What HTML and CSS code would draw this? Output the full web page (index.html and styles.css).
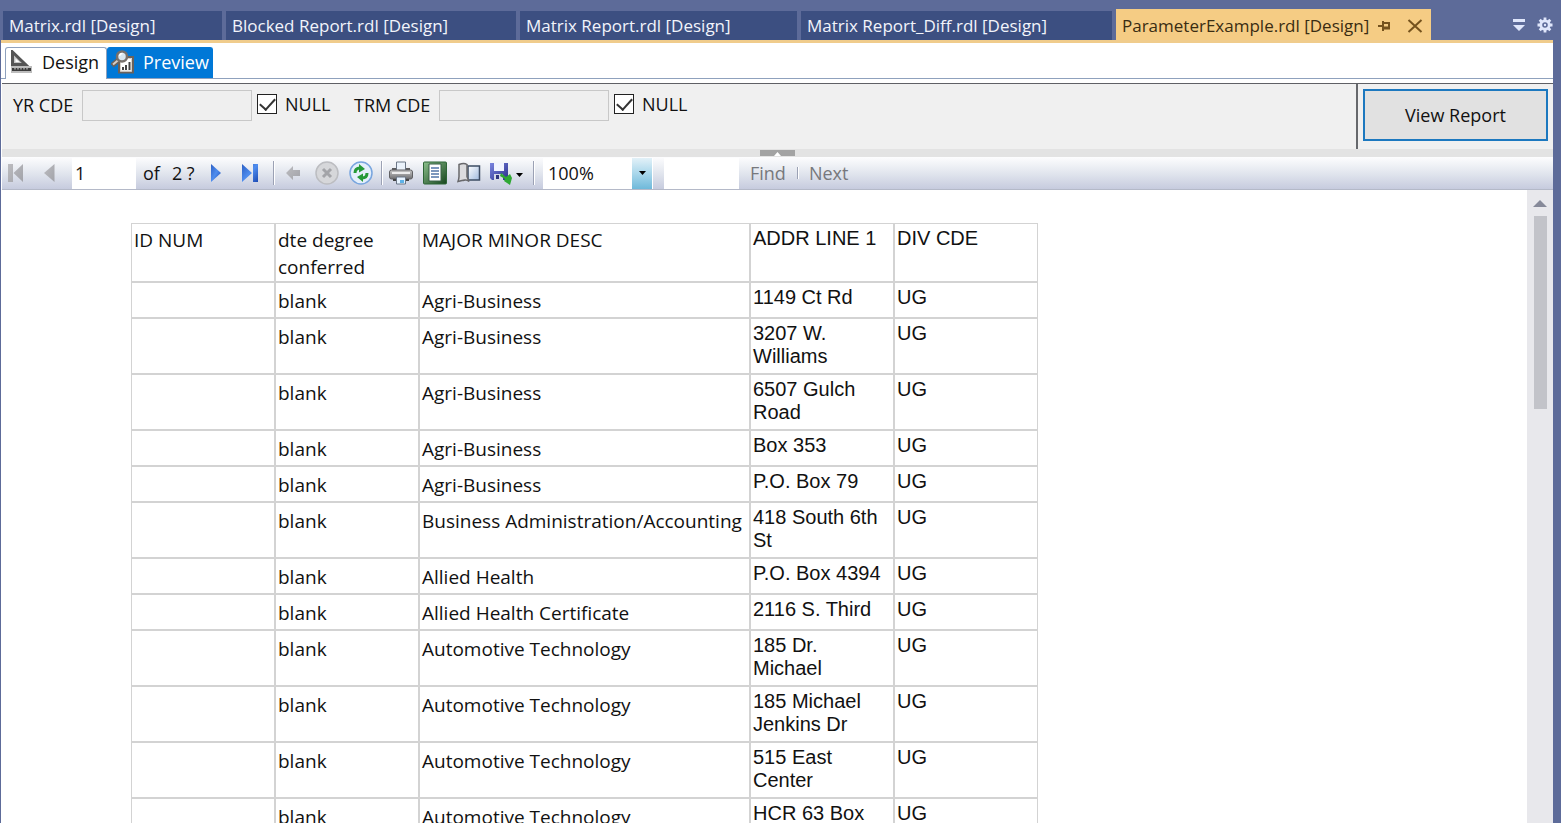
FILE: index.html
```html
<!DOCTYPE html>
<html lang="en">
<head>
<meta charset="utf-8">
<title>ParameterExample.rdl [Design]</title>
<link rel="stylesheet" href="styles.css">
</head>
<body>
<div class="app">
  <nav class="doc-tabs">
    <button class="doc-tab tab-a">Matrix.rdl [Design]</button>
    <button class="doc-tab tab-b">Blocked Report.rdl [Design]</button>
    <button class="doc-tab tab-c">Matrix Report.rdl [Design]</button>
    <button class="doc-tab tab-d">Matrix Report_Diff.rdl [Design]</button>
    <div class="doc-tab active">
      <span class="tab-name">ParameterExample.rdl [Design]</span>
      <button class="plain" aria-label="Pin"><svg width="13" height="12" viewBox="0 0 13 12" fill="none" stroke="#75521d" stroke-width="2"><path d="M0 6h5M5 1v10M5 3h6v5H5"/><path d="M5 8h7" stroke-width="3"/></svg></button>
      <button class="plain" aria-label="Close"><svg width="16" height="14" viewBox="0 0 16 14" fill="none" stroke="#75521d" stroke-width="2"><path d="M1.500 1l13 12M14.500 1l-13 12"/></svg></button>
    </div>
    <div class="tab-tools">
      <button class="plain" aria-label="Window list"><svg width="12" height="12" viewBox="0 0 12 12" fill="#dfe6fb"><path d="M0 0h12v3H0zM0 6h12l-6 6z"/></svg></button>
      <button class="plain" aria-label="Options"><svg width="16" height="16" viewBox="0 0 16 16" fill="none" stroke="#dfe6fb"><circle cx="8" cy="8" r="4.200" stroke-width="2.800"/><path d="M8 .5v3M8 12.500v3M.5 8h3M12.500 8h3M2.700 2.700l2 2M11.300 11.300l2 2M2.700 13.300l2-2M11.300 4.700l2-2" stroke-width="2.800"/><circle cx="8" cy="8" r="1.200" fill="#dfe6fb" stroke="none"/></svg></button>
    </div>
  </nav>
  <main class="document">
    <div class="view-tabs">
      <button class="view-tab">
        <svg width="23" height="24" viewBox="0 0 23 24"><path d="M2.500 2v12.500h13z" fill="#c4c4c4" stroke="#555" stroke-width="3"/><path d="M5.500 8.500v3.500h4z" fill="#fff"/><path d="M1 16h21v7H1z" fill="#bdbdbd"/><path d="M2 18h19v3H2z" fill="#3c3c3c"/><path d="M5 18v1.500M8 18v1.500M11 18v1.500M14 18v1.500M17 18v1.500" stroke="#ddd"/></svg>
        <span>Design</span>
      </button>
      <button class="view-tab selected">
        <svg width="24" height="24" viewBox="0 0 24 24"><path d="M8 7h14v15.500H8z" fill="#fff" stroke="#6a625c" stroke-width="2"/><path d="M9.500 8.500h11v12.500h-11z" fill="none" stroke="#d8d2cb"/><path d="M12 20v-3M15 20v-5M18.500 20v-8" stroke="#444" stroke-width="2"/><path d="M8 9.500l-7 6" stroke="#6b625d" stroke-width="5"/><path d="M8 9.500l-6 5" stroke="#d6cec6" stroke-width="2"/><circle cx="11" cy="6.500" r="5" fill="#d8e6ef" stroke="#77706b" stroke-width="2.500"/><path d="M8.500 6a3 3 0 0 1 3-2.500" stroke="#fff" stroke-width="1.500" fill="none"/></svg>
        <span>Preview</span>
      </button>
    </div>
    <section class="params">
      <form class="param-fields">
        <label class="param-name" for="yr">YR CDE</label>
        <input class="param-input" id="yr" type="text" disabled>
        <label class="null-box"><input type="checkbox" checked>NULL</label>
        <label class="param-name second" for="trm">TRM CDE</label>
        <input class="param-input" id="trm" type="text" disabled>
        <label class="null-box"><input type="checkbox" checked>NULL</label>
      </form>
      <div class="run"><button class="view-report">View Report</button></div>
    </section>
    <div class="splitter"><button class="grip" aria-label="Collapse parameters"><svg width="7" height="5" viewBox="0 0 7 5" fill="#fff"><path d="M0 5l3.500-4L7 5z"/></svg></button></div>
    <svg class="defs" width="0" height="0" aria-hidden="true">
      <defs>
        <linearGradient id="blue" x1="0" y1="0" x2="1" y2="1"><stop offset="0" stop-color="#2b5fc4"/><stop offset=".5" stop-color="#4f8dee"/><stop offset="1" stop-color="#1c4bb4"/></linearGradient>
        <linearGradient id="gray" x1="0" y1="0" x2="1" y2="1"><stop offset="0" stop-color="#bcbcc0"/><stop offset="1" stop-color="#a2a3a9"/></linearGradient>
        <linearGradient id="metal" x1="0" y1="0" x2="0" y2="1"><stop offset="0" stop-color="#c9c9c9"/><stop offset="1" stop-color="#6e6e70"/></linearGradient>
        <linearGradient id="green" x1="0" y1="0" x2="1" y2="1"><stop offset="0" stop-color="#8cc08c"/><stop offset="1" stop-color="#16451d"/></linearGradient>
        <linearGradient id="floppy" x1="0" y1="0" x2="1" y2="1"><stop offset="0" stop-color="#7a85e0"/><stop offset="1" stop-color="#2b2f8c"/></linearGradient>
        <linearGradient id="sheet" x1="0" y1="0" x2="1" y2="1"><stop offset="0" stop-color="#ffffff"/><stop offset="1" stop-color="#9fb9dd"/></linearGradient>
      </defs>
    </svg>
    <div class="toolbar">
      <button class="tool first" aria-label="First page" disabled><svg width="16" height="18" viewBox="0 0 16 18" fill="url(#gray)"><path d="M0 0h5v18H0zM15 0v18L5.500 9z"/></svg></button>
      <button class="tool" aria-label="Previous page" disabled><svg width="11" height="18" viewBox="0 0 11 18"><path d="M10.500 0v18L0 9z" fill="url(#gray)"/></svg></button>
      <input class="page-input" type="text" value="1" aria-label="Current page">
      <span class="page-count"><span>of</span><span>2 ?</span></span>
      <button class="tool" aria-label="Next page"><svg width="10" height="18" viewBox="0 0 10 18"><path d="M0 0v18l10-9z" fill="url(#blue)"/></svg></button>
      <button class="tool" aria-label="Last page"><svg width="16" height="18" viewBox="0 0 16 18" fill="url(#blue)"><path d="M0 0v18l10-9zM11 0h5v18h-5z"/></svg></button>
      <span class="sep"></span>
      <button class="tool" aria-label="Back" disabled><svg width="15" height="14" viewBox="0 0 15 14"><path d="M0 7l7-7v4h7v6H7v4z" fill="url(#gray)"/></svg></button>
      <button class="tool" aria-label="Stop" disabled><svg width="24" height="24" viewBox="0 0 24 24" fill="none"><circle cx="12" cy="12" r="11" fill="#d6d7da" stroke="#bcbdc1" stroke-width="1.500"/><path d="M8 8l8 8M16 8l-8 8" stroke="#a3a4a8" stroke-width="3"/></svg></button>
      <button class="tool" aria-label="Refresh"><svg width="24" height="24" viewBox="0 0 24 24" fill="none"><circle cx="12" cy="12" r="11" fill="#e4effb" stroke="#78a5de" stroke-width="1.500"/><path d="M6 12q0-5 5-5" stroke="#259a38" stroke-width="3"/><path d="M10 3l6 5-6 3.500z" fill="#259a38"/><path d="M18 12q0 5-5 5" stroke="#259a38" stroke-width="3"/><path d="M14 21l-6-5 6-3.500z" fill="#259a38"/></svg></button>
      <span class="sep short"></span>
      <button class="tool" aria-label="Print"><svg width="24" height="24" viewBox="0 0 24 24"><path d="M7.500 1h9v9h-9z" fill="#eaf2fb" stroke="#6b7686"/><path d="M3 7h4v3H3zM17 7h4v3h-4z" fill="#5c5c5e"/><rect x=".5" y="9" width="23" height="9" rx="2" fill="url(#metal)" stroke="#616164"/><path d="M3 12h18" stroke="#ededed" stroke-width="2"/><path d="M4 18h16v2H4z" fill="#444"/><path d="M7.500 16h9v7h-9z" fill="#e6f3ff" stroke="#6b7686"/><path d="M11 19h4v3h-4z" fill="#5db2e8"/></svg></button>
      <button class="tool" aria-label="Print layout"><svg width="24" height="24" viewBox="0 0 24 24"><rect x=".5" y="1" width="23" height="22" rx="1" fill="url(#green)" stroke="#2d6536"/><path d="M6 3h12v17H6z" fill="#fff" stroke="#375f45"/><path d="M8 7h8M8 10h8M8 13h8M8 16h8" stroke="#5276a8" stroke-width="1.500"/></svg></button>
      <button class="tool" aria-label="Page setup"><svg width="24" height="22" viewBox="0 0 24 22"><path d="M11 4h11.500v14H11z" fill="url(#sheet)" stroke="#3d4c63" stroke-width="1.500"/><path d="M2 2.500q5-2 8 0v12l2 5q-2-2-4-1.500t-3 .5l-4 1q1-3 1-5z" fill="#dcdcde" stroke="#68686b" stroke-width="1.500"/></svg></button>
      <button class="tool wide" aria-label="Export"><svg width="36" height="24" viewBox="0 0 36 24"><path d="M1 2h18v17H3l-2-2z" fill="url(#floppy)"/><path d="M5 2h10v8H5z" fill="#f1f4ff"/><path d="M5 13h9v6H5z" fill="#d5d9e8"/><path d="M7 14h3v4H7z" fill="#30347f"/><path d="M12 12l5 4 4-3 2 4-2 7-6-4 1-2-5-3z" fill="#2fa834"/><path d="M27 12h7l-3.500 4z" fill="#000"/></svg></button>
      <span class="sep export-sep"></span>
      <div class="zoom">
        <select aria-label="Zoom"><option>100%</option></select>
        <span class="zoom-arrow"><svg width="7" height="4" viewBox="0 0 7 4"><path d="M0 0h7L3.500 4z"/></svg></span>
      </div>
      <input class="find-input" type="text" aria-label="Find text">
      <button class="text-tool" disabled>Find</button>
      <span class="sep mini"></span>
      <button class="text-tool" disabled>Next</button>
    </div>
    <section class="report">
      <div class="page">
        <table>
          <colgroup><col class="c-std"><col class="c-std"><col class="c-major"><col class="c-std"><col class="c-std"></colgroup>
          <thead><tr><th>ID NUM</th><th>dte degree conferred</th><th>MAJOR MINOR DESC</th><th>ADDR LINE 1</th><th>DIV CDE</th></tr></thead>
          <tbody>
            <tr><td></td><td>blank</td><td>Agri-Business</td><td>1149 Ct Rd</td><td>UG</td></tr>
            <tr><td></td><td>blank</td><td>Agri-Business</td><td>3207 W. Williams</td><td>UG</td></tr>
            <tr><td></td><td>blank</td><td>Agri-Business</td><td>6507 Gulch Road</td><td>UG</td></tr>
            <tr><td></td><td>blank</td><td>Agri-Business</td><td>Box 353</td><td>UG</td></tr>
            <tr><td></td><td>blank</td><td>Agri-Business</td><td>P.O. Box 79</td><td>UG</td></tr>
            <tr><td></td><td>blank</td><td>Business Administration/Accounting</td><td>418 South 6th St</td><td>UG</td></tr>
            <tr><td></td><td>blank</td><td>Allied Health</td><td>P.O. Box 4394</td><td>UG</td></tr>
            <tr><td></td><td>blank</td><td>Allied Health Certificate</td><td>2116 S. Third</td><td>UG</td></tr>
            <tr><td></td><td>blank</td><td>Automotive Technology</td><td>185 Dr. Michael</td><td>UG</td></tr>
            <tr><td></td><td>blank</td><td>Automotive Technology</td><td>185 Michael Jenkins Dr</td><td>UG</td></tr>
            <tr><td></td><td>blank</td><td>Automotive Technology</td><td>515 East Center</td><td>UG</td></tr>
            <tr><td></td><td>blank</td><td>Automotive Technology</td><td>HCR 63 Box</td><td>UG</td></tr>
          </tbody>
        </table>
      </div>
      <div class="scrollbar">
        <svg width="14" height="7" viewBox="0 0 14 7" fill="#868999"><path d="M0 7l7-7 7 7z"/></svg>
        <div class="thumb"></div>
      </div>
    </section>
  </main>
</div>
</body>
</html>
```
FILE: styles.css
```css
* { box-sizing: border-box; }
body { margin: 0; font-family: "Open Sans", "Noto Sans", sans-serif; font-size: 18px; color: #111; }
button, input, select { font: inherit; color: inherit; margin: 0; border-radius: 0; }
button { padding: 0; border: 0; background: none; }
svg { display: block; flex: none; }
.defs { position: absolute; }

.app { height: 100vh; display: flex; flex-direction: column; overflow: hidden; background: #5d6b99; }

.doc-tabs { display: flex; align-items: flex-end; gap: 4px; height: 40px; padding-left: 3px; flex: none; font-size: 17px; }
.doc-tab { height: 29px; padding: 0 6px; background: #3c4f81; color: #f2f4fb; text-align: left; line-height: 28px; white-space: nowrap; }
.tab-a { width: 219px; }
.tab-b { width: 290px; }
.tab-c { width: 277px; }
.tab-d { width: 311px; }
.doc-tab.active { display: flex; align-items: center; width: 315px; height: 31px; padding-top: 2px; background: #f5cc84; color: #3a2c12; }
.tab-name { flex: none; width: 256px; }
.plain { display: flex; align-items: center; flex: none; margin-right: 16px; }
.active .plain:last-child { margin-right: 0; }
.tab-tools { display: flex; align-items: center; height: 30px; margin-left: auto; }
.tab-tools .plain { margin-right: 12px; }
.tab-tools .plain:last-child { margin-right: 8px; }

.document { flex: 1; min-height: 0; display: flex; flex-direction: column; margin: 0 8px 0 1px; border-top: 3px solid #f0cc8c; background: #fff; }

.view-tabs { display: flex; flex: none; height: 36px; padding: 4px 0 0 4px; border-bottom: 1px solid #8fa1bd; }
.view-tab { display: flex; align-items: center; gap: 9px; width: 102px; height: 32px; padding-left: 4px; border: 1px solid #8fa1bd; border-bottom: 0; border-radius: 3px 3px 0 0; background: #fff; line-height: 28px; }
.view-tab svg, .view-tab span { margin-bottom: 3px; }
.view-tab.selected { gap: 8px; width: 106px; height: 31px; padding-left: 3px; border-color: #0078d7; background: #0078d7; color: #fff; }

.params { display: flex; flex: none; margin-top: 4px; margin-left: 1px; border-top: 1px solid #5f6065; background: #f0f0f0; }
.param-fields { flex: 1; display: flex; align-items: center; height: 43px; padding-left: 11px; }
.param-name { width: 69px; padding-bottom: 2px; white-space: nowrap; }
.param-name.second { width: 85px; margin-left: 24px; }
.param-input { width: 170px; height: 31px; border: 1px solid #c8c8c8; background: #efefef; }
.null-box { display: flex; align-items: center; gap: 8px; width: 73px; margin-left: 5px; padding-bottom: 3px; }
.null-box input { appearance: none; display: grid; place-items: center; flex: none; width: 20px; height: 20px; border: 1px solid #222; background: #fff; }
.null-box input::after { content: ""; width: 7px; height: 13px; margin-bottom: 4px; border: solid #333; border-width: 0 2px 2px 0; transform: rotate(42deg); }
.run { padding: 5px 5px 8px 5px; border-left: 2px solid #66686c; }
.view-report { width: 185px; height: 52px; border: 2px solid #1c78bf; background: #e1e1e1; }

.splitter { display: flex; justify-content: center; flex: none; height: 8px; margin-left: 1px; background: #e3e3e3; }
.grip { display: flex; align-items: center; justify-content: center; width: 35px; height: 6px; margin-top: 1px; background: #a3a3a3; }

.toolbar { display: flex; align-items: center; flex: none; height: 33px; margin-left: 1px; border-bottom: 1px solid #b4b9c8; background: linear-gradient(#fdfdfe, #e2e6ee 50%, #c6cbde); }
.tool { display: flex; align-items: center; justify-content: center; width: 34px; height: 32px; flex: none; }
.tool.first { width: 28px; margin-right: 2px; }
.tool.wide { width: 42px; }
.page-input { width: 64px; height: 31px; margin-left: 6px; padding: 0 0 0 3px; border: 0; background: #fff; }
.page-count { display: flex; gap: 12px; width: 63px; padding-left: 7px; white-space: nowrap; }
.sep { width: 2px; height: 24px; margin: 0 1px 0 6px; border-left: 1px solid #9ba1b4; border-right: 1px solid #fff; }
.sep.short { margin: 0 1px 0 3px; }
.sep.export-sep { margin: 0 8px 0 5px; }
.sep.mini { height: 12px; margin: 0 10px 0 11px; }
.zoom { position: relative; width: 110px; height: 31px; }
.zoom select { appearance: none; width: 100%; height: 100%; padding: 0 0 0 5px; border: 0; background: #fff; }
.zoom-arrow { position: absolute; top: 0; right: 1px; display: grid; place-items: center; width: 20px; height: 31px; background: linear-gradient(#e3f1f8, #a9d7eb 50%, #6fb9da); pointer-events: none; }
.find-input { width: 75px; height: 31px; margin-left: 11px; border: 0; background: #fff; }
.text-tool { color: #77787c; }
.find-input + .text-tool { margin-left: 11px; }

.report { flex: 1; min-height: 0; display: flex; margin-left: 1px; overflow: hidden; }
.page { flex: 1; padding: 33px 0 0 129px; }
table { table-layout: fixed; width: 907px; border-collapse: separate; border-spacing: 0; font-size: 19px; line-height: 27px; }
.c-std { width: 144px; }
.c-major { width: 331px; }
th, td { height: 36px; padding: 3px 2px 0; border: 1px solid #d3d3d3; font-weight: 400; text-align: left; vertical-align: top; }
td { padding-top: 5px; }
th:nth-child(n+4), td:nth-child(n+4) { padding-top: 3px; padding-bottom: 5px; font-family: "Liberation Sans", Arial, sans-serif; font-size: 20px; line-height: 23px; }
.scrollbar { display: flex; flex-direction: column; align-items: center; gap: 9px; width: 26px; padding-top: 10px; background: #e8e8ec; }
.thumb { width: 13px; height: 193px; background: #c2c3c9; }
```
